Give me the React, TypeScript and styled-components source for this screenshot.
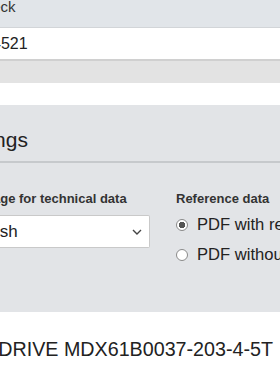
import React from 'react';
import styled, { createGlobalStyle } from 'styled-components';

const GlobalStyle = createGlobalStyle`
    html, body {
        margin: 0;
        padding: 0;
        background: #ffffff;
        overflow: hidden;
    }
    body {
        font-family: 'Liberation Sans', Arial, sans-serif;
        color: #222222;
    }
`;

const Page = styled.div`
    width: 280px;
    height: 380px;
    overflow: hidden;
    display: flex;
    flex-direction: column;
`;

const CheckHeader = styled.div`
    height: 27px;
    background-color: #e1e5e9;
    border-bottom: 1px solid #d2d5d8;
    font-size: 15px;
    line-height: 13px;
    color: #333;
    white-space: nowrap;
`;

const Clipped = styled.span<{ $shift: number }>`
    display: inline-block;
    margin-left: ${props => -props.$shift}px;
    white-space: nowrap;
`;

const SerialInput = styled.div`
    height: 31px;
    background: #ffffff;
    border-bottom: 2px solid #d0d0d0;
    display: flex;
    align-items: center;
    font-size: 16px;
    color: #222;
    white-space: nowrap;
`;

const GreyBand = styled.div`
    height: 22px;
    background: #e3e3e3;
`;

const Spacer = styled.div`
    height: 22px;
    background: #ffffff;
`;

const Panel = styled.section`
    height: 207px;
    background-color: #e2e4e7;
    display: flex;
    flex-direction: column;
`;

const PanelTitle = styled.h2`
    margin: 0;
    height: 58px;
    border-bottom: 2px solid #c6c9cc;
    box-sizing: border-box;
    padding-top: 23px;
    font-size: 21px;
    line-height: 24px;
    font-weight: normal;
    color: #222;
    white-space: nowrap;
`;

const Columns = styled.div`
    display: grid;
    grid-template-columns: 150px 1fr;
    column-gap: 26px;
    padding-top: 28px;
`;

const Field = styled.div`
    display: flex;
    flex-direction: column;
    min-width: 0;
`;

const Label = styled.div`
    font-size: 13px;
    font-weight: bold;
    line-height: 15px;
    color: #333;
    white-space: nowrap;
    margin-bottom: 9px;
`;

const Select = styled.div`
    height: 33px;
    box-sizing: border-box;
    background: #ffffff;
    border: 1px solid #c9c9c9;
    border-left: none;
    border-radius: 0 2px 2px 0;
    display: flex;
    align-items: center;
    justify-content: space-between;
    padding-right: 7px;
    font-size: 17px;
    color: #222;
    overflow: hidden;
`;

const RadioList = styled.div`
    display: flex;
    flex-direction: column;
    gap: 11px;
`;

const RadioRow = styled.label`
    display: flex;
    align-items: center;
    gap: 9px;
    font-size: 16.6px;
    line-height: 19px;
    color: #222;
    white-space: nowrap;
`;

const RadioDot = styled.span<{ $checked?: boolean }>`
    width: 12px;
    height: 12px;
    box-sizing: border-box;
    border-radius: 50%;
    border: 1px solid #8a8a8a;
    background: ${props =>
        props.$checked ? 'radial-gradient(circle, #555 0 3px, #fff 3.5px)' : '#fff'};
    flex: none;
`;

const ProductTitle = styled.div`
    padding-top: 26px;
    font-size: 19.7px;
    line-height: 22px;
    color: #222;
    white-space: nowrap;
`;

const Chevron = () => (
    <svg width="10" height="6" viewBox="0 0 10 6">
        <path d="M1 1l4 4 4-4" fill="none" stroke="#444" strokeWidth="1.4" />
    </svg>
);

const App = () => {
    return (
        <Page>
            <GlobalStyle />
            <CheckHeader>
                <Clipped $shift={27}>Check</Clipped>
            </CheckHeader>
            <SerialInput>
                <Clipped $shift={8}>4521</Clipped>
            </SerialInput>
            <GreyBand />
            <Spacer />
            <Panel>
                <PanelTitle>
                    <Clipped $shift={48}>Settings</Clipped>
                </PanelTitle>
                <Columns>
                    <Field>
                        <Label>
                            <Clipped $shift={46}>Language for technical data</Clipped>
                        </Label>
                        <Select>
                            <Clipped $shift={38}>English</Clipped>
                            <Chevron />
                        </Select>
                    </Field>
                    <Field>
                        <Label>Reference data</Label>
                        <RadioList>
                            <RadioRow>
                                <RadioDot $checked />
                                PDF with reference data
                            </RadioRow>
                            <RadioRow>
                                <RadioDot />
                                PDF without reference data
                            </RadioRow>
                        </RadioList>
                    </Field>
                </Columns>
            </Panel>
            <ProductTitle>
                <Clipped $shift={52}>MOVIDRIVE MDX61B0037-203-4-5T</Clipped>
            </ProductTitle>
        </Page>
    );
};

export default App;
